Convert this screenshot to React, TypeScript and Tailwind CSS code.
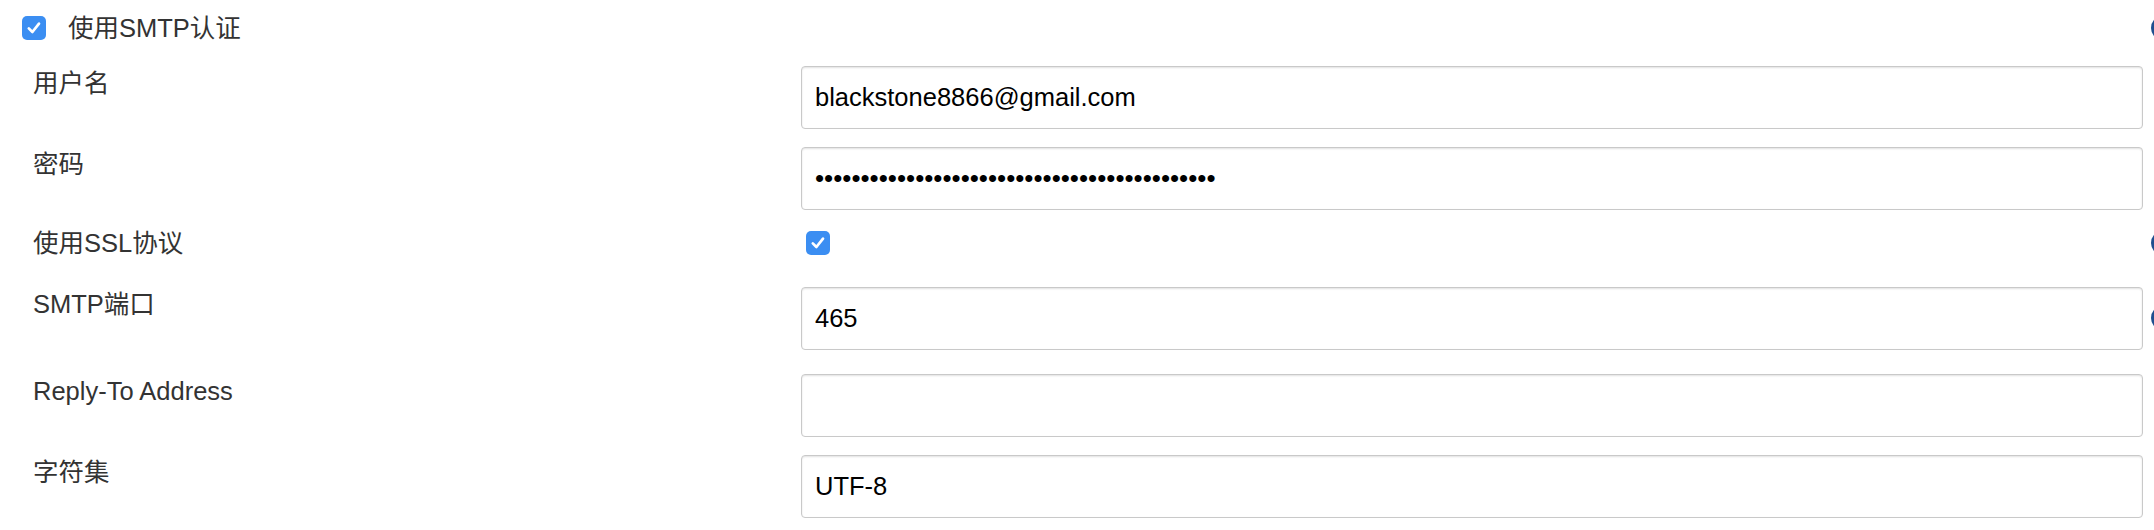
import React from 'react';

const FONT = '"Liberation Sans", "Noto Sans CJK SC", Arial, sans-serif';

function BlueCheck() {
  return (
    <span className="flex h-[24px] w-[24px] items-center justify-center rounded-[5px] bg-[#3b8ef2]">
      <svg width="18" height="18" viewBox="0 0 18 18" fill="none">
        <path d="M3.8 9.4 L7.4 13 L14 4.6" stroke="#fff" strokeWidth="2.7" strokeLinecap="round" strokeLinejoin="round" />
      </svg>
    </span>
  );
}

// Hilfe-Icon: nur der linke Rand ist im Bild sichtbar
function HelpIcon() {
  return <span className="block h-[26px] w-[26px] shrink-0 rounded-full bg-[#1f4f8f]" />;
}

function TextBox({ value, type = 'text' }: { value: string; type?: string }) {
  return (
    <input
      type={type}
      readOnly
      value={value}
      className={`block h-[63px] w-full rounded-[4px] border border-[#c9c9c9] bg-white px-[13px] text-black shadow-[inset_0_1px_2px_rgba(0,0,0,0.12)] outline-none ${
        type === 'password' ? 'text-[26px]' : 'text-[25.5px]'
      }`}
      style={{ fontFamily: FONT }}
    />
  );
}

// Zeile: Label links, Feld ab x=801, Hilfe-Icon rechts (wird am Rand abgeschnitten)
function Row({
  label,
  children,
  help = false,
  mt,
  center = false,
}: {
  label: string;
  children: React.ReactNode;
  help?: boolean;
  mt: string;
  center?: boolean;
}) {
  return (
    <div className={`flex ${center ? 'h-[34px] items-center' : 'items-start'} ${mt}`}>
      <div className="w-[801px] shrink-0 pl-[33px] text-[25.5px] leading-[34px] text-[#333]">{label}</div>
      <div className="w-[1342px] shrink-0">{children}</div>
      <div className={`flex w-[40px] shrink-0 pl-[8px] ${center ? '' : 'pt-[18px]'}`}>{help && <HelpIcon />}</div>
    </div>
  );
}

export default function App() {
  const pwd = '•'.repeat(44);
  return (
    <div className="h-[530px] w-[2154px] overflow-hidden bg-white" style={{ fontFamily: FONT }}>
      <div className="box-border flex h-[40px] items-center pt-[16px]">
        <div className="flex w-[2151px] shrink-0 items-center pl-[22px]">
          <BlueCheck />
          <span className="ml-[22px] text-[25.5px] leading-[24px] text-[#333]">使用SMTP认证</span>
        </div>
        <HelpIcon />
      </div>

      <Row label="用户名" mt="mt-[26px]">
        <TextBox value="blackstone8866@gmail.com" />
      </Row>
      <Row label="密码" mt="mt-[18px]">
        <TextBox type="password" value={pwd} />
      </Row>
      <Row label="使用SSL协议" mt="mt-[16px]" center help>
        <div className="pl-[5px]">
          <BlueCheck />
        </div>
      </Row>
      <Row label="SMTP端口" mt="mt-[27px]" help>
        <TextBox value="465" />
      </Row>
      <Row label="Reply-To Address" mt="mt-[24px]">
        <TextBox value="" />
      </Row>
      <Row label="字符集" mt="mt-[18px]">
        <TextBox value="UTF-8" />
      </Row>
    </div>
  );
}
